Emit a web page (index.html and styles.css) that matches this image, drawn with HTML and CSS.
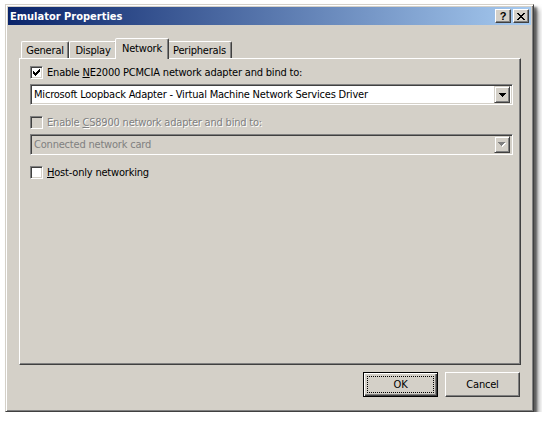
FILE: index.html
```html
<!DOCTYPE html>
<html>
<head>
<meta charset="utf-8">
<title>Emulator Properties</title>
<link rel="stylesheet" href="styles.css">
</head>
<body>
<div class="window">
  <div class="titlebar">
    <span class="title">Emulator Properties</span>
    <div class="caption-btns">
      <span class="cbtn cbtn-help">?</span>
      <span class="cbtn">
        <svg width="8" height="7" viewBox="0 0 8 7" shape-rendering="crispEdges"><path d="M0 0h2v1h-2zM6 0h2v1h-2zM1 1h2v1h-2zM5 1h2v1h-2zM2 2h4v1h-4zM3 3h2v1h-2zM2 4h4v1h-4zM1 5h2v1h-2zM5 5h2v1h-2zM0 6h2v1h-2zM6 6h2v1h-2z" fill="#000"/></svg>
      </span>
    </div>
  </div>
  <div class="body">
    <div class="tabs">
      <div class="tab tab-general">General</div>
      <div class="tab tab-display">Display</div>
      <div class="tab tab-network selected">Network</div>
      <div class="tab tab-periph">Peripherals</div>
    </div>
    <div class="panel">
      <div class="check-row row1">
        <span class="checkbox">
          <svg width="7" height="7" viewBox="0 0 7 7" shape-rendering="crispEdges"><path d="M6 0h1v3h-1zM5 1h1v3h-1zM4 2h1v3h-1zM3 3h1v3h-1zM2 4h1v3h-1zM1 3h1v3h-1zM0 2h1v3h-1z" fill="#000"/></svg>
        </span>
        <span class="label">Enable <u>N</u>E2000 PCMCIA network adapter and bind to:</span>
      </div>
      <div class="combo row2">
        <span class="combo-text">Microsoft Loopback Adapter - Virtual Machine Network Services Driver</span>
        <span class="combo-btn">
          <svg width="7" height="4" viewBox="0 0 7 4" shape-rendering="crispEdges"><path d="M0 0h7v1h-7zM1 1h5v1h-5zM2 2h3v1h-3zM3 3h1v1h-1z" fill="#000"/></svg>
        </span>
      </div>
      <div class="check-row row3 disabled">
        <span class="checkbox"></span>
        <span class="label">Enable <u>C</u>S8900 network adapter and bind to:</span>
      </div>
      <div class="combo row4 disabled">
        <span class="combo-text">Connected network card</span>
        <span class="combo-btn">
          <svg width="8" height="5" viewBox="0 0 8 5" shape-rendering="crispEdges"><path d="M1 1h7v1h-7zM2 2h5v1h-5zM3 3h3v1h-3zM4 4h1v1h-1z" fill="#fff"/><path d="M0 0h7v1h-7zM1 1h5v1h-5zM2 2h3v1h-3zM3 3h1v1h-1z" fill="#808080"/></svg>
        </span>
      </div>
      <div class="check-row row5">
        <span class="checkbox"></span>
        <span class="label"><u>H</u>ost-only networking</span>
      </div>
    </div>
    <div class="buttons">
      <button class="btn default"><span class="focus">OK</span></button>
      <button class="btn">Cancel</button>
    </div>
  </div>
</div>
</body>
</html>
```

FILE: styles.css
```css
html, body {
  margin: 0;
  padding: 0;
  background: #ffffff;
}
body {
  font-family: "DejaVu Sans Condensed", "DejaVu Sans", sans-serif;
  font-stretch: condensed;
  font-size: 11px;
  letter-spacing: -0.2px;
  color: #000;
}
.window {
  margin: 4px 0 0 5px;
  width: 529px;
  height: 408px;
  box-sizing: border-box;
  background: #d4d0c8;
  border: 1px solid;
  border-color: #d4d0c8 #404040 #404040 #d4d0c8;
  padding: 2px;
  box-shadow: inset 1px 1px #ffffff, inset -1px -1px #808080, 3px 3px 2px rgba(0,0,0,0.45), 5px 5px 5px rgba(0,0,0,0.35);
  display: flex;
  flex-direction: column;
}
.titlebar {
  height: 18px;
  background: linear-gradient(to right, #0a246a, #a6caf0);
  display: flex;
  align-items: center;
  justify-content: space-between;
  padding: 0 2px 0 2px;
}
.title {
  color: #fff;
  font-family: "DejaVu Sans Condensed", "DejaVu Sans", sans-serif;
  font-weight: bold;
  font-size: 11px;
  letter-spacing: 0;
}
.caption-btns {
  display: flex;
  gap: 2px;
}
.cbtn {
  width: 16px;
  height: 14px;
  box-sizing: border-box;
  background: #d4d0c8;
  border: 1px solid;
  border-color: #ffffff #404040 #404040 #ffffff;
  box-shadow: inset -1px -1px #808080;
  display: flex;
  align-items: center;
  justify-content: center;
}
.cbtn-help {
  font-family: "Liberation Sans", sans-serif;
  font-weight: bold;
  font-size: 11px;
  line-height: 12px;
  font-stretch: normal;
  letter-spacing: 0;
}
.body {
  flex: 1;
  padding: 13px 10px 0 11px;
  display: flex;
  flex-direction: column;
}
.tabs {
  height: 20px;
  display: flex;
  align-items: flex-end;
  padding-left: 2px;
  position: relative;
  z-index: 1;
}
.tab {
  height: 17px;
  box-sizing: border-box;
  border: 1px solid;
  border-bottom: none;
  border-color: #ffffff #404040 transparent #ffffff;
  border-radius: 2px 2px 0 0;
  box-shadow: inset -1px 0 #808080;
  display: flex;
  align-items: center;
  justify-content: center;
  padding-top: 1px;
}
.tab-general { width: 48px; }
.tab-display { width: 48px; }
.tab-network { width: 50px; }
.tab-periph { width: 65px; }
.tab.selected {
  height: 21px;
  margin: 0 -2px -1px -2px;
  width: 54px;
  background: #d4d0c8;
  position: relative;
  z-index: 2;
  padding-bottom: 2px;
}
.panel {
  height: 307px;
  box-sizing: border-box;
  border: 1px solid;
  border-color: #ffffff #404040 #404040 #ffffff;
  box-shadow: inset -1px -1px #808080;
  padding: 7px 7px 0 10px;
  display: flex;
  flex-direction: column;
}
.check-row {
  display: flex;
  align-items: center;
  height: 13px;
  gap: 4px;
}
.checkbox {
  width: 13px;
  height: 13px;
  box-sizing: border-box;
  background: #fff;
  border: 1px solid;
  border-color: #808080 #ffffff #ffffff #808080;
  box-shadow: inset 1px 1px #404040, inset -1px -1px #d4d0c8;
  display: flex;
  align-items: center;
  justify-content: center;
  flex: none;
}
.check-row.disabled .checkbox {
  background: #d4d0c8;
}
.check-row.disabled .label {
  color: #808080;
  text-shadow: 1px 1px #ffffff;
}
.combo {
  height: 21px;
  box-sizing: border-box;
  background: #fff;
  border: 1px solid;
  border-color: #808080 #ffffff #ffffff #808080;
  box-shadow: inset 1px 1px #404040, inset -1px -1px #d4d0c8;
  display: flex;
  align-items: center;
  justify-content: space-between;
  padding: 2px 2px 2px 3px;
}
.combo.disabled {
  background: #d4d0c8;
  color: #808080;
}
.combo-btn {
  width: 16px;
  height: 17px;
  box-sizing: border-box;
  background: #d4d0c8;
  border: 1px solid;
  border-color: #d4d0c8 #404040 #404040 #d4d0c8;
  box-shadow: inset 1px 1px #ffffff, inset -1px -1px #808080;
  display: flex;
  align-items: center;
  justify-content: center;
}
.row2 { margin-top: 5px; }
.row3 { margin-top: 11px; }
.row4 { margin-top: 5px; }
.row5 { margin-top: 11px; }
.buttons {
  display: flex;
  justify-content: flex-end;
  gap: 7px;
  margin-top: 7px;
  padding-right: 1px;
}
.btn {
  width: 75px;
  height: 25px;
  box-sizing: border-box;
  font: inherit;
  font-stretch: condensed;
  letter-spacing: -0.2px;
  background: #d4d0c8;
  border: 1px solid;
  border-color: #ffffff #404040 #404040 #ffffff;
  box-shadow: inset -1px -1px #808080;
  padding: 0;
  margin: 0;
  color: #000;
  display: flex;
  align-items: center;
  justify-content: center;
}
.btn.default {
  border: 1px solid #000;
  box-shadow: inset 1px 1px #ffffff, inset -1px -1px #404040, inset -2px -2px #808080;
  padding: 3px;
}
.focus {
  flex: 1;
  align-self: stretch;
  border: 1px dotted #000;
  display: flex;
  align-items: center;
  justify-content: center;
}
```
